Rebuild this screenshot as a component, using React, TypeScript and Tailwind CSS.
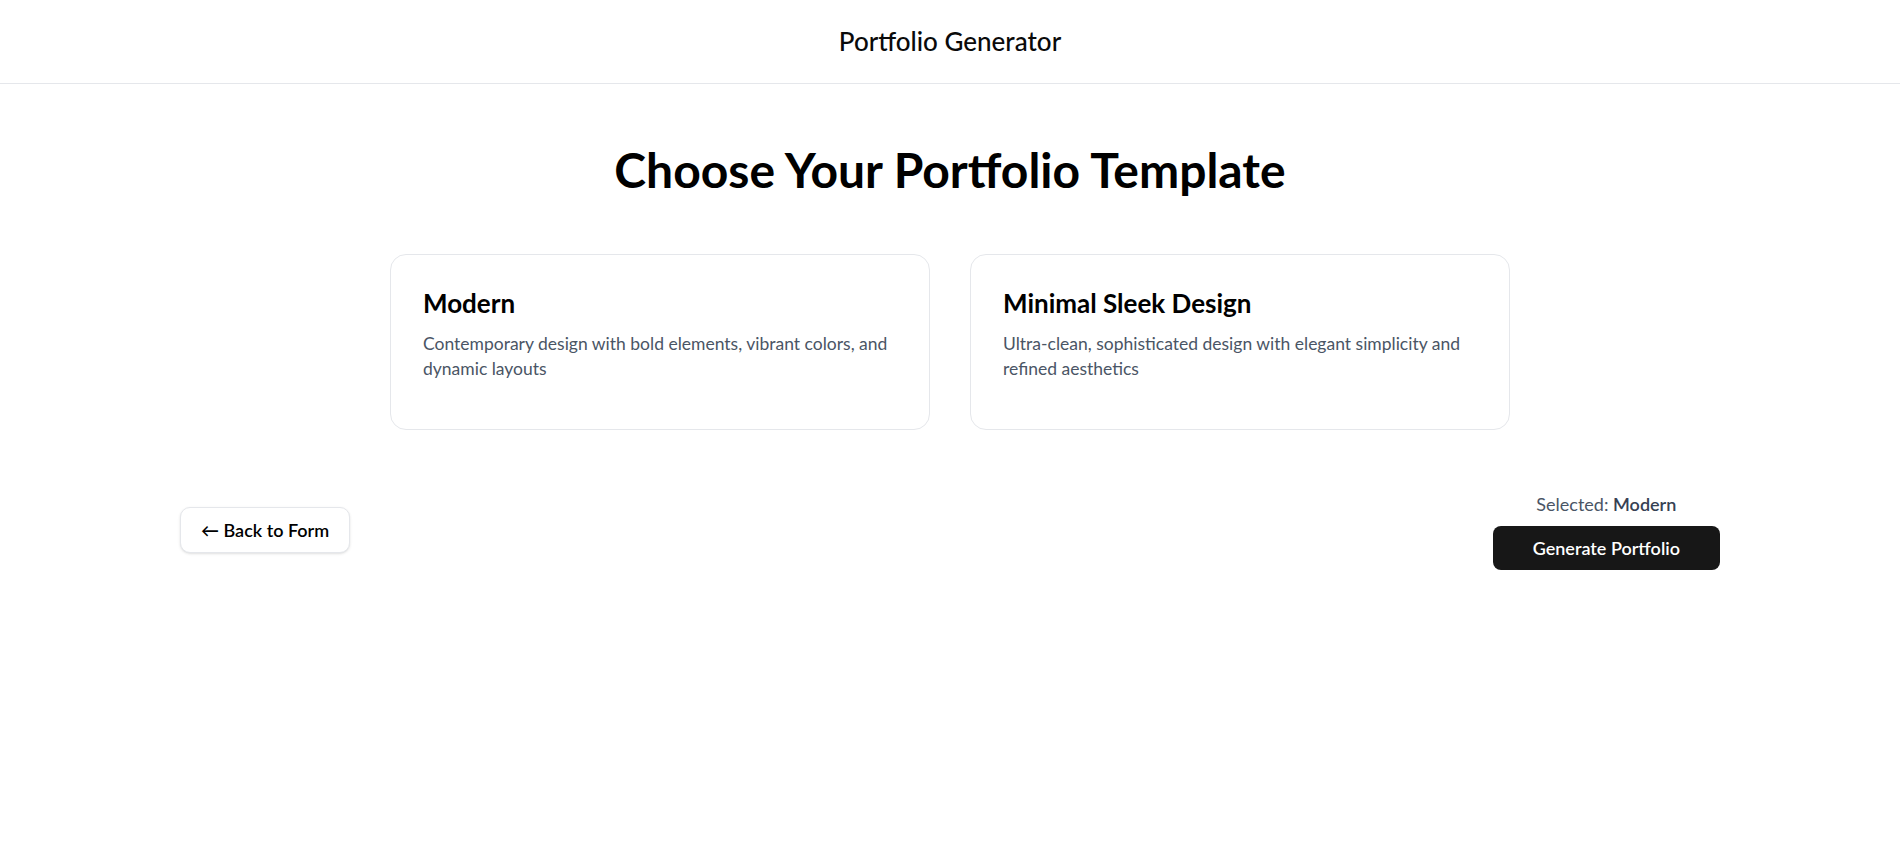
import { useState } from "react";

type Template = {
  id: string;
  name: string;
  description: string;
};

const templates: Template[] = [
  {
    id: "modern",
    name: "Modern",
    description:
      "Contemporary design with bold elements, vibrant colors, and dynamic layouts",
  },
  {
    id: "minimal",
    name: "Minimal Sleek Design",
    description:
      "Ultra-clean, sophisticated design with elegant simplicity and refined aesthetics",
  },
];

const TemplateCard = ({
  template,
  onSelect,
}: {
  template: Template;
  onSelect: (id: string) => void;
}) => {
  return (
    <div
      onClick={() => onSelect(template.id)}
      className="h-[176px] cursor-pointer rounded-2xl border border-gray-200 bg-white p-8"
    >
      <h2 className="text-[26px] leading-8 font-bold text-black">{template.name}</h2>
      <p className="mt-3 text-[17.5px] leading-[25px] text-gray-600">
        {template.description}
      </p>
    </div>
  );
};

const App = () => {
  const [selected, setSelected] = useState("modern");
  const selectedName = templates.find((t) => t.id === selected)?.name;

  return (
    <div className="min-h-screen bg-white font-['Lato',sans-serif] text-black">
      <header className="flex h-[84px] items-center justify-center border-b border-gray-200">
        <h1 className="text-[26px] font-medium text-[#0a0a0a]">Portfolio Generator</h1>
      </header>

      <main className="pt-[62px]">
        <h2 className="text-center text-5xl leading-[48px] font-bold">
          Choose Your Portfolio Template
        </h2>

        <div className="mx-auto mt-[60px] grid max-w-[1120px] grid-cols-2 gap-10">
          {templates.map((template) => (
            <TemplateCard
              key={template.id}
              template={template}
              onSelect={setSelected}
            />
          ))}
        </div>

        <div className="mx-auto mt-[60px] flex max-w-[1540px] items-center justify-between">
          <button
            type="button"
            className="rounded-[10px] border border-gray-200 bg-white px-5 py-2 text-lg leading-7 font-semibold shadow-sm"
          >
            ← Back to Form
          </button>
          <div className="flex flex-col items-center gap-2">
            <p className="text-lg leading-7 text-gray-600">
              Selected:{" "}
              <span className="font-semibold text-gray-700">{selectedName}</span>
            </p>
            <button
              type="button"
              className="rounded-lg bg-[#171717] px-10 py-2 text-lg leading-7 font-semibold text-white"
            >
              Generate Portfolio
            </button>
          </div>
        </div>
      </main>
    </div>
  );
};

export default App;
